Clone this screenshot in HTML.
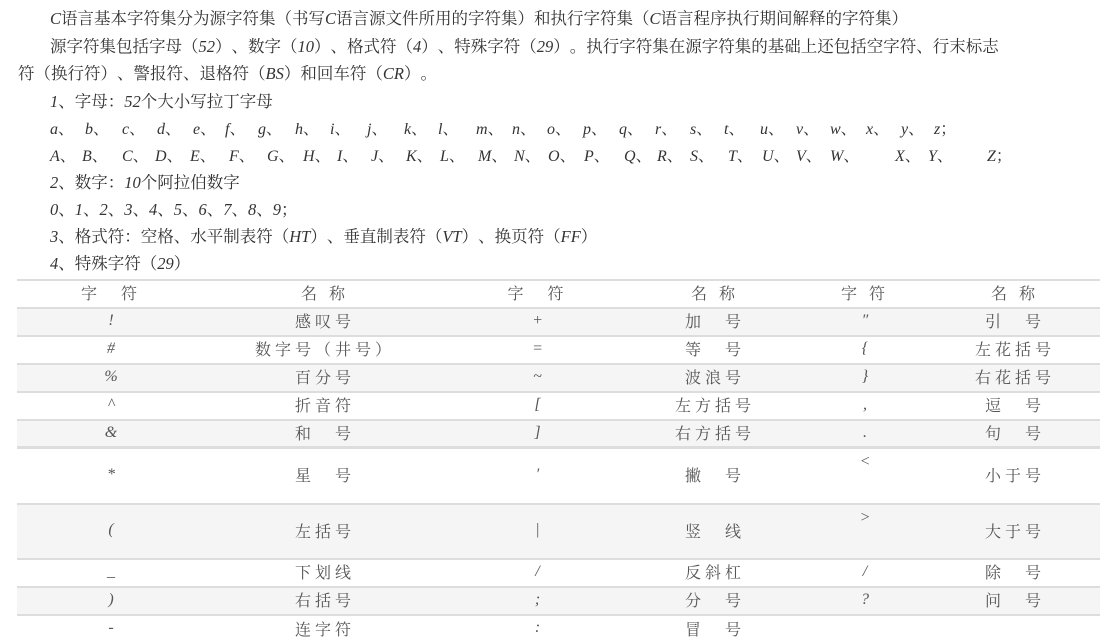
<!DOCTYPE html>
<html><head><meta charset="utf-8"><style>
*{text-spacing-trim:space-all}
body{margin:0;width:1110px;height:643px;overflow:hidden;background:#fff;font-family:"Liberation Serif","Noto Serif CJK SC","Noto Sans CJK SC",serif;color:#333;font-size:16px}
.l{position:absolute;left:50px;white-space:nowrap;line-height:20px;font-size:16.5px}
i{font-style:italic}
.s{position:absolute;white-space:nowrap;font-style:italic;line-height:20px}
.r{position:absolute;left:17px;width:1083px;border-top:2px solid #ddd;box-sizing:border-box}
.r.g{background:#f5f5f5}
.c{position:absolute;top:0;bottom:0;display:flex;align-items:center;justify-content:center;color:#555;letter-spacing:4px;white-space:nowrap}
.c.i{font-style:italic;letter-spacing:0;font-family:"Liberation Serif",serif}
</style></head><body>
<div class="l" style="top:9px"><i>C</i>语言基本字符集分为源字符集（书写<i>C</i>语言源文件所用的字符集）和执行字符集（<i>C</i>语言程序执行期间解释的字符集）</div>
<div class="l" style="top:37px">源字符集包括字母（<i>52</i>）、数字（<i>10</i>）、格式符（<i>4</i>）、特殊字符（<i>29</i>）。执行字符集在源字符集的基础上还包括空字符、行末标志</div>
<div class="l" style="top:64px;left:18px">符（换行符）、警报符、退格符（<i>BS</i>）和回车符（<i>CR</i>）。</div>
<div class="l" style="top:92px"><i>1</i>、字母：<i>52</i>个大小写拉丁字母</div>
<div id="lo"></div><div id="up"></div>
<div class="l" style="top:173px"><i>2</i>、数字：<i>10</i>个阿拉伯数字</div>
<div class="l" style="top:200px"><i>0</i>、<i>1</i>、<i>2</i>、<i>3</i>、<i>4</i>、<i>5</i>、<i>6</i>、<i>7</i>、<i>8</i>、<i>9</i>；</div>
<div class="l" style="top:227px"><i>3</i>、格式符：空格、水平制表符（<i>HT</i>）、垂直制表符（<i>VT</i>）、换页符（<i>FF</i>）</div>
<div class="l" style="top:254px"><i>4</i>、特殊字符（<i>29</i>）</div>
<div id="tb"></div>
<script>
var lo="abcdefghijklmnopqrstuvwxyz",lx=[50,85,122,157,193,225,258,295,330,367,404,438,476,512,547,583,619,655,690,724,760,796,830,866,901,934];
var ux=[50,82,122,155,190,229,267,303,337,371,406,440,478,514,548,584,624,657,690,728,762,796,830,895,928,987];
var h="";
for(var k=0;k<26;k++){h+='<div class="s" style="top:120px;left:'+lx[k]+'px">'+lo[k]+(k==25?'<span style="font-style:normal">；</span>':'<span style="font-style:normal">、</span>')+'</div>';
h+='<div class="s" style="top:147px;left:'+ux[k]+'px">'+lo[k].toUpperCase()+(k==25?'<span style="font-style:normal">；</span>':'<span style="font-style:normal">、</span>')+'</div>';}
document.getElementById('lo').innerHTML=h;
var cols=[[0,188],[188,240],[428,185],[613,170],[783,130],[913,170]];
var rows=[[279,28,["字　符","名 称","字　符","名 称","字 符","名 称"],0],
[307,28,["!","感叹号","+","加　号","″","引　号"],1],
[335,28,["#","数字号（井号）","=","等　号","{","左花括号"],0],
[363,28,["%","百分号","~","波浪号","}","右花括号"],1],
[391,28,["^","折音符","[","左方括号",",","逗　号"],0],
[419,28,["&amp;","和　号","]","右方括号",".","句　号"],1],
[446,57,["*","星　号","′","撇　号","&lt;","小于号"],0],
[503,55,["(","左括号","|","竖　线","&gt;","大于号"],1],
[558,28,["_","下划线","/","反斜杠","/","除　号"],0],
[586,28,[")","右括号",";","分　号","?","问　号"],1],
[614,29,["-","连字符",":","冒　号","",""],0]];
var t="";
rows.forEach(function(r,ri){t+='<div class="r'+(r[3]?' g':'')+'" style="top:'+r[0]+'px;height:'+r[1]+'px'+(ri==6?';border-top:3px solid #ddd':'')+'">';
r[2].forEach(function(x,ci){var it=(ri>0&&ci%2==0);var st='left:'+cols[ci][0]+'px;width:'+cols[ci][1]+'px;padding-bottom:3px;box-sizing:border-box';
if(ci==4&&r[1]>40)st+=';align-items:flex-start;padding-top:4px';
t+='<div class="c'+(it?' i':'')+'" style="'+st+'">'+x+'</div>';});t+='</div>';});
document.getElementById('tb').innerHTML=t;
</script>
</body></html>
